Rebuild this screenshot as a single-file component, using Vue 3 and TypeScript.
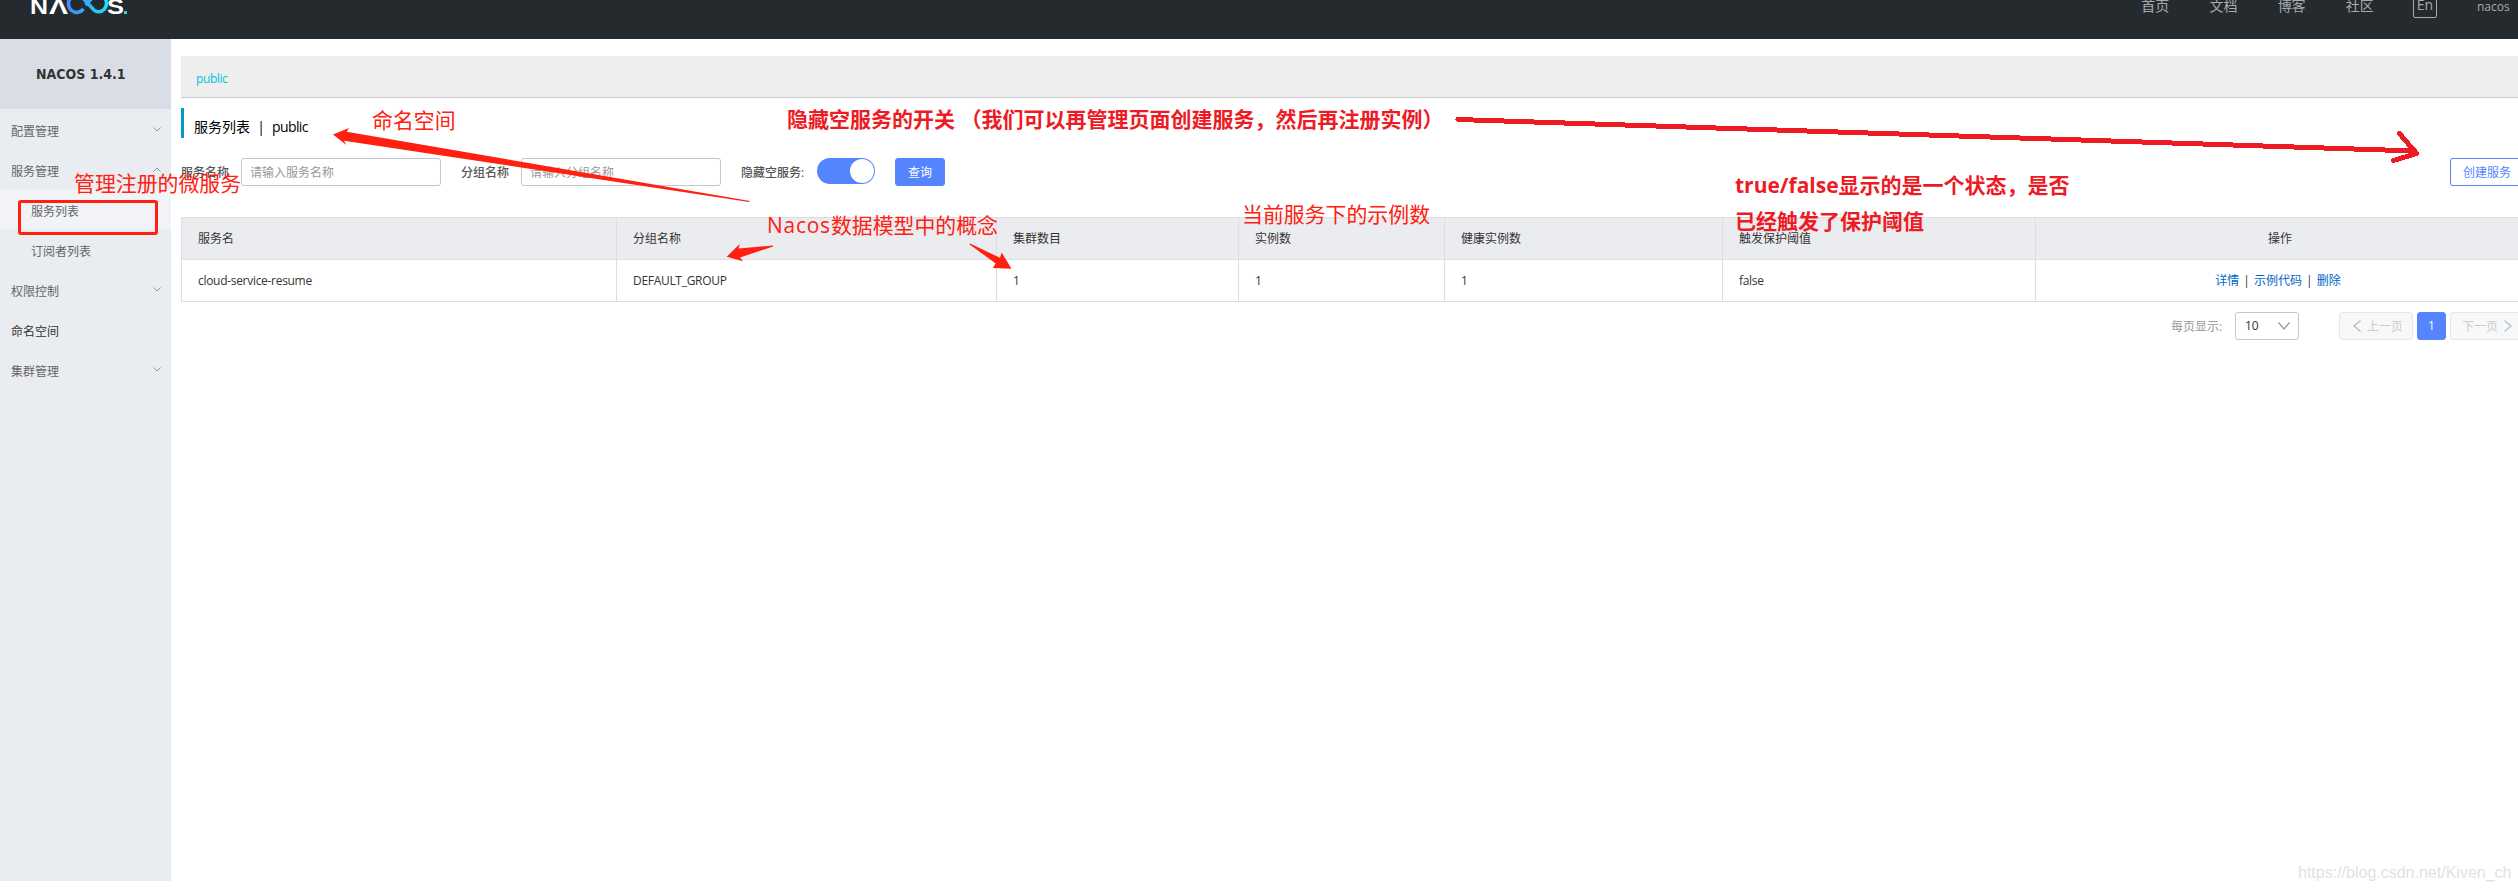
<script setup lang="ts">
interface MenuItem {
  label: string
  arrow?: 'up' | 'down'
  child?: boolean
  active?: boolean
  dark?: boolean
}

const links: string[] = ['首页', '文档', '博客', '社区']

const menu: MenuItem[] = [
  { label: '配置管理', arrow: 'down' },
  { label: '服务管理', arrow: 'up' },
  { label: '服务列表', child: true, active: true },
  { label: '订阅者列表', child: true },
  { label: '权限控制', arrow: 'down' },
  { label: '命名空间', dark: true },
  { label: '集群管理', arrow: 'down' },
]

const columns: string[] = ['服务名', '分组名称', '集群数目', '实例数', '健康实例数', '触发保护阈值']
const row: string[] = ['cloud-service-resume', 'DEFAULT_GROUP', '1', '1', '1', 'false']
</script>

<template>
  <div class="page">
    <header class="top">
      <svg class="logo" width="98" height="16" viewBox="0 0 98 16">
        <defs>
          <linearGradient id="loop" gradientUnits="userSpaceOnUse" x1="36" y1="0" x2="77" y2="0">
            <stop offset="0" stop-color="#4a86ff" />
            <stop offset="0.5" stop-color="#2fb0f5" />
            <stop offset="1" stop-color="#1be3f0" />
          </linearGradient>
        </defs>
        <text class="mark" x="-1" y="14" textLength="18" lengthAdjust="spacingAndGlyphs">N</text>
        <text class="mark" x="18" y="14" textLength="19" lengthAdjust="spacingAndGlyphs">Λ</text>
        <path
          d="M52.500 9 C49 13 44 13.500 40.500 10.500 C36.500 7 36.500 1 40 -2.500 C44 -6 49 -5 52.500 -1.500 L61.500 8.500 C65 13 70 12.500 73 9.500 C77 5 76 0 72.500 -3 C69 -6 64 -5 61 -2 L54.500 5"
          fill="none" stroke="url(#loop)" stroke-width="3.600"
        />
        <text class="mark" x="76" y="14" textLength="17" lengthAdjust="spacingAndGlyphs">S</text>
        <rect x="93" y="11" width="3" height="3" rx="0.500" fill="#1be3f0" />
      </svg>
      <nav class="nav">
        <span v-for="l in links" :key="l" class="link">{{ l }}</span>
        <span class="lang">En</span>
        <span class="user">nacos</span>
      </nav>
    </header>

    <div class="body">
      <aside class="side">
        <div class="version">NACOS 1.4.1</div>
        <div
          v-for="m in menu" :key="m.label" class="item"
          :class="{ child: m.child, active: m.active, dark: m.dark }"
        >
          <span>{{ m.label }}</span>
          <svg v-if="m.arrow" class="chev" :class="m.arrow" width="8" height="5" viewBox="0 0 8 5">
            <path d="M0.500 0.500 L4 4 L7.500 0.500" fill="none" stroke="#8f9399" />
          </svg>
        </div>
      </aside>

      <main class="main">
        <div class="crumb"><span>public</span></div>
        <h1 class="title"><span>服务列表</span><span class="bar">|</span><span class="ns">public</span></h1>

        <div class="search">
          <label class="lab first">服务名称</label>
          <div class="input">请输入服务名称</div>
          <label class="lab second">分组名称</label>
          <div class="input">请输入分组名称</div>
          <label class="lab third">隐藏空服务:</label>
          <div class="switch"><i></i></div>
          <button class="btn primary">查询</button>
          <button class="btn create">创建服务</button>
        </div>

        <div class="table">
          <div class="tr head">
            <div v-for="c in columns" :key="c" class="td"><span>{{ c }}</span></div>
            <div class="td ops"><span>操作</span></div>
          </div>
          <div class="tr">
            <div v-for="(c, i) in row" :key="i" class="td latin"><span>{{ c }}</span></div>
            <div class="td ops actions">
              <a>详情</a><b>|</b><a>示例代码</a><b>|</b><a>删除</a>
            </div>
          </div>
        </div>

        <div class="pager">
          <span class="size-label">每页显示:</span>
          <div class="select">
            <span>10</span>
            <svg width="12" height="8" viewBox="0 0 12 8"><path d="M0.500 0.500 L6 7 L11.500 0.500" fill="none" stroke="#999" stroke-width="1.200" /></svg>
          </div>
          <div class="pg prev">
            <svg width="8" height="12" viewBox="0 0 8 12"><path d="M7.500 0.500 L1 6 L7.500 11.500" fill="none" stroke="#bbb" stroke-width="1.300" /></svg>
            <span>上一页</span>
          </div>
          <div class="pg current">1</div>
          <div class="pg next">
            <span>下一页</span>
            <svg width="8" height="12" viewBox="0 0 8 12"><path d="M0.500 0.500 L7 6 L0.500 11.500" fill="none" stroke="#bbb" stroke-width="1.300" /></svg>
          </div>
        </div>
      </main>
    </div>

    <!-- Markup drawn over the console -->
    <svg class="marks" width="2518" height="892" viewBox="0 0 2518 892">
      <g fill="#ff2010">
        <polygon points="333,134.500 349,128 346.700,131.700 750,201 749,202 344,140.700 346.500,145" />
        <polygon points="726.700,256.700 739.700,244 738.700,248.500 773,245.500 773,246.500 740,257.500 743,261.300" />
        <polygon points="1011.500,268.800 1001.700,252.500 1000,257.800 970,243.500 969.300,244.200 995.700,263.500 992.700,268" />
      </g>
      <rect x="19.500" y="201.500" width="137" height="32" rx="1.500" fill="none" stroke="#ff2010" stroke-width="3" />
      <g fill="none" stroke="#ed1c24" stroke-width="5" stroke-linecap="round" stroke-linejoin="round" shape-rendering="crispEdges">
        <path d="M1458 119.500 L2415 151" />
        <path d="M2399.500 133.500 L2416.500 153.500 L2393.500 160.500" />
      </g>
    </svg>
    <div class="note n-manage">管理注册的微服务</div>
    <div class="note n-ns">命名空间</div>
    <div class="note n-model"><em>Nacos</em>数据模型中的概念</div>
    <div class="note n-count">当前服务下的示例数</div>
    <div class="note strong n-switch">隐藏空服务的开关 （我们可以再管理页面创建服务，然后再注册实例）</div>
    <div class="note strong n-state">true/false显示的是一个状态，是否<br />已经触发了保护阈值</div>
    <div class="watermark">https://blog.csdn.net/Kiven_ch</div>
  </div>
</template>

<style>
body {
  background: #fff;
}
</style>

<style scoped>
.page {
  position: relative;
  width: 2518px;
  height: 892px;
  overflow: hidden;
  background: #fff;
  font: 12px/18px "Open Sans", "Noto Sans CJK SC", sans-serif;
  color: #333;
}
.page * {
  box-sizing: border-box;
  white-space: nowrap;
}
.top {
  height: 39px;
  background: #252a2f;
  display: flex;
  justify-content: space-between;
  overflow: hidden;
}
.logo {
  margin-left: 31px;
  flex: none;
}
.mark {
  font: bold 22px "Liberation Sans", sans-serif;
  fill: #fff;
}
.nav {
  display: flex;
  align-items: flex-start;
  color: #a8aaac;
  font-size: 14px;
  line-height: 20px;
  padding-right: 8px;
}
.link {
  width: 28px;
  margin-right: 40.2px;
  margin-top: -4px;
}
.lang {
  width: 24px;
  height: 22px;
  margin: -4px 40px 0 -1px;
  border: 1px solid #a8aaac;
  border-radius: 2px;
  text-align: center;
  line-height: 16px;
}
.user {
  font-size: 12px;
  width: 33px;
  margin-top: -3px;
}
.body {
  display: flex;
}
.side {
  width: 171px;
  height: 842px;
  flex: none;
  background: #e9ecf1;
}
.version {
  height: 70px;
  background: #d9dde5;
  padding-left: 36px;
  font: bold 14px/70px "DejaVu Sans Condensed", "DejaVu Sans", sans-serif;
}
.item {
  height: 40px;
  padding: 0 10px 0 11px;
  display: flex;
  align-items: center;
  justify-content: space-between;
  color: #666;
}
.item span {
  padding-top: 5px;
}
.child {
  padding-left: 31px;
}
.active {
  background: #f1f3f7;
}
.dark {
  color: #333;
}
.chev.up {
  transform: rotate(180deg);
}
.main {
  flex: 1;
  min-width: 0;
  padding: 17px 0 0 10px;
  overflow: hidden;
}
.crumb {
  height: 42px;
  background: #eee;
  border-bottom: 1px solid #ccc;
  padding: 14px 0 0 15px;
  color: #00c1de;
  letter-spacing: -0.4px;
}
.title {
  margin: 10px 0 0;
  height: 30px;
  border-left: 3px solid #09c;
  padding: 4px 0 0 10px;
  font-size: 14px;
  font-weight: 400;
  line-height: 29px;
  color: #000;
  display: flex;
}
.bar {
  width: 22px;
  text-align: center;
}
.ns {
  letter-spacing: -0.6px;
}
.search {
  margin-top: 20px;
  height: 28px;
  display: flex;
}
.lab {
  color: #555;
  font-weight: 500;
  line-height: 30px;
  flex: none;
}
.first,
.second {
  width: 60px;
}
.second {
  margin-left: 20px;
}
.third {
  margin-left: 20px;
  width: 76px;
}
.input {
  width: 200px;
  height: 28px;
  flex: none;
  border: 1px solid #c4c6cf;
  border-radius: 3px;
  padding-left: 8px;
  line-height: 28px;
  color: #999;
}
.switch {
  width: 58px;
  height: 26px;
  flex: none;
  border-radius: 13px;
  background: #5584ff;
  padding: 1px;
  display: flex;
  justify-content: flex-end;
}
.switch i {
  width: 24px;
  height: 24px;
  border-radius: 50%;
  background: #fff;
}
.btn {
  font: inherit;
  height: 28px;
  border-radius: 3px;
  border: 1px solid #5584ff;
  padding: 0 12px;
  line-height: 28px;
  flex: none;
}
.primary {
  width: 50px;
  margin-left: 20px;
  background: #5584ff;
  color: #fff;
}
.create {
  width: 74px;
  margin-left: 1505px;
  background: #fff;
  color: #5584ff;
}
.table {
  margin-top: 31px;
  width: 2345px;
  border: 1px solid #dcdee3;
}
.tr {
  display: grid;
  grid-template-columns: 435px 380px 242px 206px 278px 313px 1fr;
  height: 41px;
}
.head {
  height: 42px;
  background: #ebecf0;
  border-bottom: 1px solid #dcdee3;
}
.td {
  border-right: 1px solid #dcdee3;
  padding: 1px 0 0 16px;
  display: flex;
  align-items: center;
}
.latin {
  letter-spacing: -0.3px;
}
.ops {
  padding: 1px 0 0;
  justify-content: center;
}
.actions {
  padding-right: 4px;
}
.ops a {
  color: #0066cc;
}
.ops b {
  font-weight: 400;
  width: 14.700px;
  text-align: center;
}
.pager {
  margin-top: 10px;
  height: 28px;
  display: flex;
}
.size-label {
  margin-left: 1990px;
  width: 64px;
  flex: none;
  color: #999;
  line-height: 30px;
}
.select {
  width: 64px;
  height: 28px;
  flex: none;
  border: 1px solid #c4c6cf;
  border-radius: 3px;
  display: flex;
  align-items: center;
  justify-content: space-between;
  padding: 0 8px 0 9px;
}
.pg {
  height: 28px;
  flex: none;
  border: 1px solid #e6e7eb;
  border-radius: 3px;
  background: #f7f8fa;
  color: #ccc;
  display: flex;
  align-items: center;
}
.pg span {
  padding-top: 2px;
}
.prev {
  width: 74px;
  margin-left: 40px;
  padding-left: 13px;
  gap: 6px;
}
.current {
  width: 29px;
  margin: 0 4px;
  background: #5584ff;
  border-color: #5584ff;
  color: #fff;
  justify-content: center;
}
.next {
  width: 74px;
  padding-left: 11px;
  gap: 6px;
}
.marks {
  position: absolute;
  left: 0;
  top: 0;
}
.note {
  position: absolute;
  font-size: 20.9px;
  line-height: 30px;
  color: #ff2010;
  font-weight: 400;
}
.n-manage {
  left: 74px;
  top: 168px;
}
.n-ns {
  left: 372px;
  top: 105px;
}
.n-model {
  left: 767px;
  top: 210px;
}
.n-model em {
  font-style: normal;
  letter-spacing: 0.8px;
}
.n-count {
  left: 1242px;
  top: 199px;
}
.strong {
  font-weight: 700;
  font-size: 21px;
  color: #ed1c24;
}
.n-switch {
  left: 787px;
  top: 104px;
}
.n-state {
  left: 1735px;
  top: 167px;
  line-height: 36px;
}
.watermark {
  position: absolute;
  left: 2298px;
  top: 863px;
  font: 16px/20px "Liberation Sans", sans-serif;
  color: #e2e2e2;
}
</style>
